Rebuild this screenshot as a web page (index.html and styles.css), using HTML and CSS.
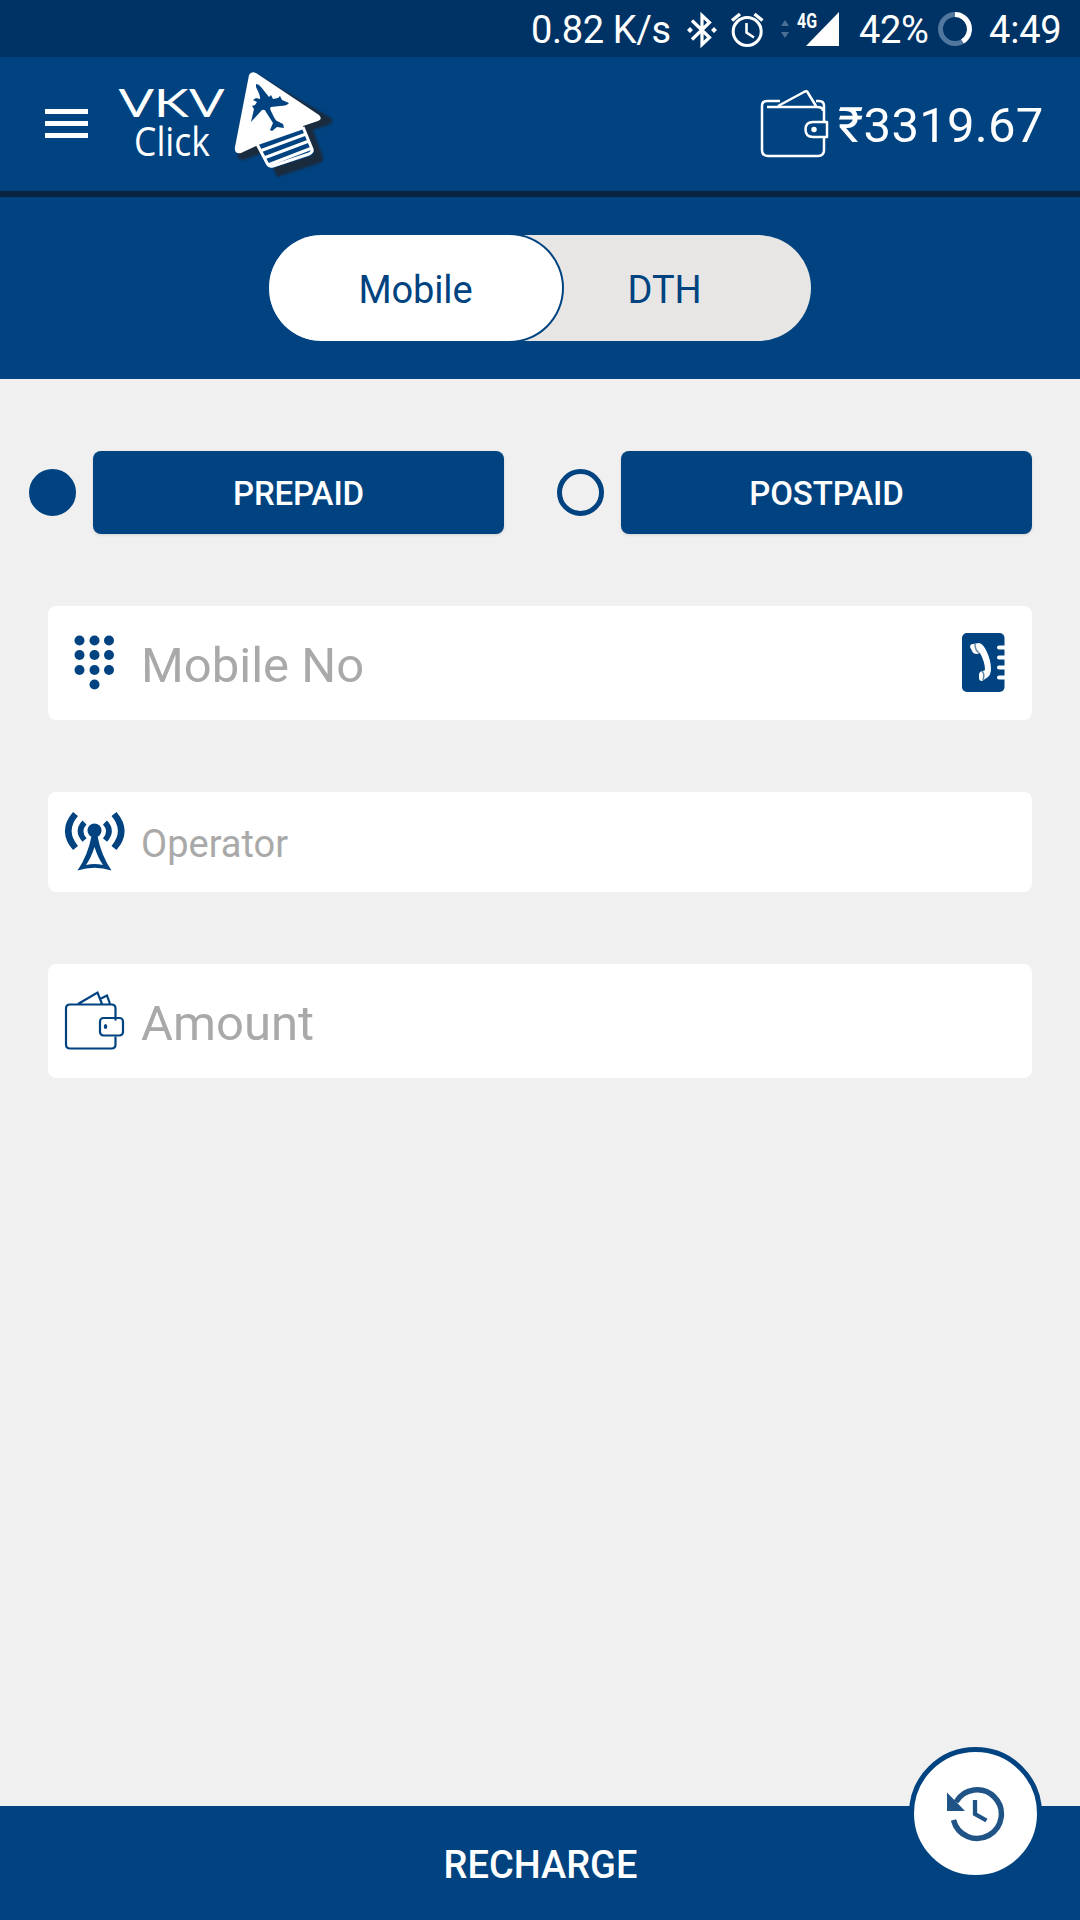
FILE: index.html
```html
<!DOCTYPE html>
<html lang="en">
<head>
<meta charset="utf-8">
<title>VKV Click</title>
<link rel="stylesheet" href="styles.css">
</head>
<body>
<div class="screen">
  <div class="status">
    <span class="speed">0.82 K/s</span>
    <svg class="status-icons" width="156" height="40" viewBox="685 8 156 40">
      <g fill="none" stroke="#fff" stroke-width="3.2">
        <path d="M692 19.500L709.500 36.500L702 43.500V14.500L709.500 21.500L692 38.500"/>
        <circle cx="747.200" cy="30.500" r="14" stroke-width="3"/>
        <path d="M746.500 22V31.500L754 36.500" stroke-width="2.600"/>
        <path d="M732 19.500L740 13M754.500 13L762.500 19.500" stroke-width="3.400"/>
      </g>
      <path fill="#fff" d="M687 29l3-3 3 3-3 3zM711 29l3-3 3 3-3 3zM839 11V45H806z"/>
      <path fill="#4a7097" d="M781 25h8l-4-6zM781 31h8l-4 6z"/>
      <text class="network" x="797" y="27" textLength="20" lengthAdjust="spacingAndGlyphs">4G</text>
    </svg>
    <span class="battery">42%</span>
    <svg class="ring" width="36" height="36" viewBox="0 0 36 36" fill="none" stroke-width="5">
      <circle cx="18" cy="18" r="14.500" stroke="#52779f"/>
      <path d="M18 3.500A14.500 14.500 0 0 1 25.500 30.400" stroke="#fff"/>
    </svg>
    <span class="clock">4:49</span>
  </div>

  <header class="header">
    <div class="menu"><i></i><i></i><i></i></div>
    <svg class="logo" width="220" height="116" viewBox="116 66 220 116">
      <text class="logo-top" x="118.500" y="117" textLength="106" lengthAdjust="spacingAndGlyphs">VKV</text>
      <text class="logo-bottom" x="134" y="156" textLength="76" lengthAdjust="spacingAndGlyphs">Click</text>
      <g class="logo-shadow">
        <path d="M256 74L331 118Q335 122 328 125L313 130L323 157Q324 161 320 163L277 177L266 152L243 160Q237 160 238 155z"/>
      </g>
      <path fill="#004380" d="M257 144L303 126L314 151Q314 154 311 156L273 168Q269 169 267 166z"/>
      <path fill="#fff" d="M249 75Q251 71 256 73L319 115Q323 119 318 121L303 126L304 129L258 145L241 153Q234 154 235 147z"/>
      <path fill="none" stroke="#fff" stroke-width="3" stroke-linejoin="round" d="M257 144L267 163Q269 167 273 166L309 154Q313 152 312 149L303 127"/>
      <path stroke="#fff" stroke-width="3" d="M260 151L306 134M264 158L309 141M268 165L312 148"/>
      <path fill="#004380" d="M256 84Q259 84 261 87L269 97L271 95L273 99L278 98L280 96L282 100L289 103Q287 106 280 106L271 107Q269 108 272 113Q275 120 277 121L283 124L284 128L277 127L272 131L270 130L273 123L266 112Q265 109 262 110L251 122L254 109L252 106L255 105L257 102L253 100L256 98L260 99Q261 97 256 87z"/>
    </svg>
    <div class="balance">
      <svg width="70" height="70" viewBox="760 89 70 70" fill="none" stroke="#fff" stroke-width="2.500" stroke-linejoin="round">
        <path d="M824 122V106Q824 101 819 101H816M780 101H767Q762 101 762 106V150Q762 156 768 156H818Q824 156 824 150V137M767 107H817Q823 107 823 111M778 106L804 92Q807 90 808 93L816 106"/>
        <path d="M827 122H813Q805.500 122 805.500 129.500Q805.500 137 813 137H827z"/>
        <circle cx="814" cy="129.500" r="2" fill="#fff" stroke-width="1.500"/>
      </svg>
      <span class="amount">₹3319.67</span>
    </div>
  </header>

  <nav class="switcher">
    <div class="tabs">
      <div class="tab tab-active">Mobile</div>
      <div class="tab tab-other">DTH</div>
    </div>
  </nav>

  <main class="form">
    <div class="plans">
      <div class="plan"><span class="radio radio-on"></span><div class="plan-button">PREPAID</div></div>
      <div class="plan"><span class="radio"></span><div class="plan-button">POSTPAID</div></div>
    </div>

    <div class="field">
      <svg class="field-icon" width="60" height="60" viewBox="0 7 60 60" fill="#004380">
        <circle cx="15.500" cy="14.500" r="5"/><circle cx="30.500" cy="14.500" r="5"/><circle cx="45" cy="14.500" r="5"/>
        <circle cx="15.500" cy="29" r="5"/><circle cx="30.500" cy="29" r="5"/><circle cx="45" cy="29" r="5"/>
        <circle cx="15.500" cy="44" r="5"/><circle cx="30.500" cy="44" r="5"/><circle cx="45" cy="44" r="5"/>
        <circle cx="30.500" cy="58.500" r="5"/>
      </svg>
      <span class="hint">Mobile No</span>
      <svg class="contacts" width="44" height="60" viewBox="0 1 44 60">
        <rect x="0" y="1" width="42.500" height="59" rx="5" fill="#004380"/>
        <path d="M37 15.500H44M37 25.500H44M37 35.500H44M37 45.500H44" stroke="#fff" stroke-width="4" stroke-linecap="round"/>
        <path fill="#fff" d="M8 15Q8 12 11 12L17 11Q21 12 24 18Q29 28 29 37Q29 42 26 45L20 49Q17 49 17 46V42Q18 39 21 39L23 38Q23 30 18 21L15 22Q11 22 10 19z"/>
        <path fill="none" stroke="#6688a5" stroke-width="1.500" d="M13 12Q13 18 17 21M20 39Q23 42 21 48"/>
      </svg>
    </div>

    <div class="field field-small">
      <svg class="field-icon" width="60" height="60" viewBox="0 2 60 60" fill="none" stroke="#004380">
        <circle cx="30.500" cy="20.500" r="7" fill="#004380" stroke="none"/>
        <path stroke-width="5.500" d="M20.500 12.500Q12.500 21 20.500 30M41 12.500Q49 21 41 30"/>
        <path stroke-width="6.500" d="M11.500 4Q-3 21 11.500 38M50 4Q64.500 21 50 38"/>
        <path fill="#004380" stroke="none" fill-rule="evenodd" d="M27.500 26H33.500Q37 45 47.500 60.500Q30.500 55 13.500 60.500Q24 45 27.500 26zM30.500 37Q27 48 22 55Q30.500 53 39 55Q34 48 30.500 37z"/>
      </svg>
      <span class="hint hint-small">Operator</span>
    </div>

    <div class="field">
      <svg class="field-icon" width="60" height="60" viewBox="0 1.500 60 60" fill="none" stroke="#004380" stroke-width="2.200">
        <path d="M51.500 31V19Q51.500 15 47.500 15H6Q2 15 2 19V55Q2 59 6 59H47.500Q51.500 59 51.500 55V47M14 14.500L33.500 3L38 14.500M36 9.500L43 6L46 14.500"/>
        <rect x="36" y="28.500" width="23" height="17.500" rx="3.500"/>
        <ellipse cx="41.500" cy="37" rx="1.700" ry="2.500" fill="#004380" stroke="none"/>
      </svg>
      <span class="hint">Amount</span>
    </div>
  </main>

  <footer class="footer"><span class="recharge">RECHARGE</span>
    <div class="history">
      <svg width="60" height="60" viewBox="946 1785 60 60">
        <path fill="none" stroke="#205487" stroke-width="5.500" d="M956 1803A24.300 24.300 0 1 1 953.500 1821"/>
        <path fill="#205487" d="M947 1793.500V1812H965z"/>
        <path fill="none" stroke="#205487" stroke-width="4.300" d="M975 1801V1815L986.500 1821.500"/>
      </svg>
    </div>
  </footer>
</div>
</body>
</html>
```
FILE: styles.css
```css
* { box-sizing: border-box; }
body { margin: 0; font-family: Roboto, "Liberation Sans", sans-serif; background: #f0f0f0; }
svg { display: block; flex: none; }
.screen { width: 1080px; height: 1920px; display: flex; flex-direction: column; overflow: hidden; }

.status { height: 57px; background: #003365; color: #fff; display: flex; align-items: center; font-size: 38px; line-height: 57px; padding: 3px 0 0 531px; }
.speed { width: 154px; white-space: nowrap; letter-spacing: -0.35px; }
.status-icons { margin-top: -3px; }
.battery { margin-left: 18px; width: 78px; letter-spacing: -0.3px; }
.ring { margin-top: -3px; }
.clock { margin-left: 16px; white-space: nowrap; letter-spacing: -0.2px; }
.network { font: 700 20px Roboto, sans-serif; fill: #fff; }

.header { height: 140px; background: #004380; border-bottom: 6px solid #09243e; display: flex; align-items: center; padding-left: 45px; color: #fff; }
.menu { width: 43px; display: flex; flex-direction: column; gap: 7px; margin-right: 28px; padding-bottom: 2px; }
.menu i { height: 5px; background: #fff; }
.logo-top { font: 400 39px Lato, sans-serif; fill: #fff; }
.logo-bottom { font: 400 40px "Open Sans", sans-serif; fill: #fff; }
.logo-shadow { fill: #1a2b3e; filter: blur(1px); }
.balance { margin-left: auto; width: 320px; display: flex; align-items: center; gap: 8px; font-size: 49px; line-height: 58px; white-space: nowrap; }
.amount { padding-top: 3px; letter-spacing: 0.25px; }

.switcher { height: 182px; background: #004380; display: flex; justify-content: center; align-items: center; }
.tabs { width: 542px; height: 106px; display: flex; border-radius: 53px; background: #e7e6e5; overflow: hidden; font-size: 38px; color: #004380; }
.tab { display: flex; align-items: center; justify-content: center; padding-top: 4px; letter-spacing: -0.15px; }
.tab-active { width: 293px; background: #fff; border-radius: 0 53px 53px 0; box-shadow: 0 0 0 2px #004380; }
.tab-other { width: 205px; }

.form { flex: 1; padding: 72px 48px 0; display: flex; flex-direction: column; }
.plans { display: flex; gap: 53px; margin: 0 0 72px -19px; height: 83px; }
.plan { display: flex; align-items: center; gap: 17px; }
.radio { width: 47px; height: 47px; border-radius: 50%; border: 5px solid #004380; }
.radio-on { background: #004380; }
.plan-button { width: 411px; height: 83px; border-radius: 8px; background: #004380; color: #fff; font-weight: 500; font-size: 33px; letter-spacing: -0.1px; display: flex; align-items: center; justify-content: center; padding-top: 2px; box-shadow: 0 1px 3px #00000022; }

.field { height: 114px; margin-bottom: 72px; background: #fff; border-radius: 8px; display: flex; align-items: center; padding: 0 26px 0 16px; }
.field-small { height: 100px; }
.field-icon { margin-right: 17px; overflow: visible; }
.hint { font-size: 49px; line-height: 58px; color: #a9a9a9; padding-top: 5px; }
.hint-small { font-size: 38px; line-height: 45px; }
.contacts { margin-left: auto; }

.footer { height: 114px; background: #004380; color: #fff; font-weight: 500; font-size: 38px; display: flex; align-items: center; justify-content: center; padding-top: 4px; position: relative; }
.recharge { padding-left: 1px; }
.history { position: absolute; top: -59px; right: 38px; width: 133px; height: 133px; border-radius: 50%; background: #fff; border: 5px solid #004380; display: flex; align-items: center; justify-content: center; }
```
